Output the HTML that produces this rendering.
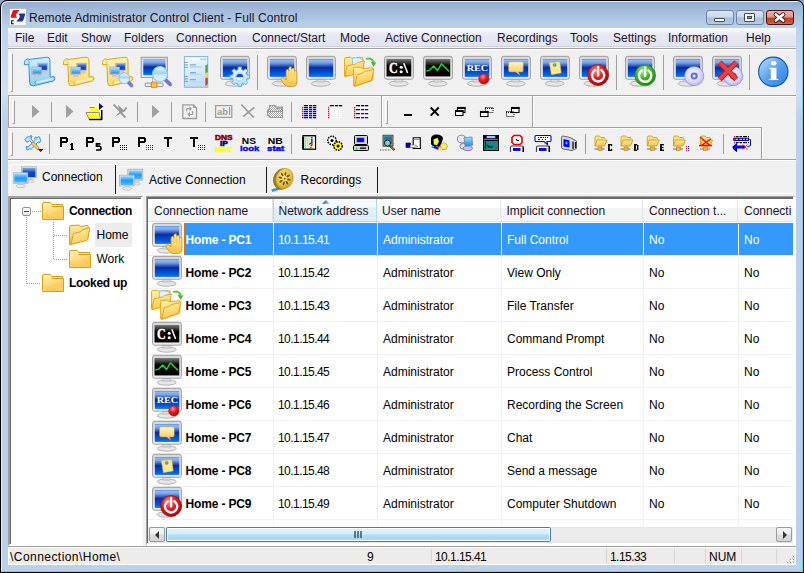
<!DOCTYPE html>
<html><head><meta charset="utf-8">
<style>
*{margin:0;padding:0;box-sizing:border-box}
html,body{width:804px;height:573px;overflow:hidden;background:#fff}
body{position:relative;font-family:"Liberation Sans",sans-serif;font-size:12px;color:#000}
.a{position:absolute}
.t{position:absolute;white-space:pre;line-height:14px}
#win{position:absolute;left:0;top:0;width:804px;height:573px;background:#b9d1ea;border:1px solid #000;border-radius:7px 7px 0 0;overflow:hidden}
#title{position:absolute;left:0;top:0;width:804px;height:28px;background:linear-gradient(#8ea8c9 0px,#a3bbd9 10px,#b9d1ea 27px)}
#menubar{position:absolute;left:8px;top:28px;width:788px;height:20px;background:linear-gradient(#fbfcfd 0px,#f2f4f9 3px,#e6e9f3 7px,#e1e5f2 18px,#cfd3de 18px,#cfd3de 19px,#f4f4f6 19px)}
#client{position:absolute;left:8px;top:48px;width:788px;height:517px;background:#f0f0f0}
.hl{position:absolute;height:1px;background:#a0a0a0}
.hw{position:absolute;height:1px;background:#fff}
.vl{position:absolute;width:1px;background:#a0a0a0}
.vw{position:absolute;width:1px;background:#fff}
.grip{position:absolute;width:3px;border-left:1px solid #fff;border-top:1px solid #fff;border-right:1px solid #a0a0a0;border-bottom:1px solid #a0a0a0}
.sep{position:absolute;width:1px;background:#a0a0a0}
svg{position:absolute;overflow:visible}
.mi{position:absolute;top:31px;white-space:pre;line-height:14px;color:#1e0f2e}
.cell{position:absolute;white-space:pre;line-height:14px}
</style></head><body>
<div id="win"></div>
<div id="title"></div>
<div class="a" style="left:0;top:0;width:804px;height:573px;border:1px solid #000;border-bottom:none;border-radius:7px 7px 0 0;box-shadow:inset 1px 1px 0 #e6edf6,inset -1px 0 0 #5fd3f3"></div>
<div class="a" style="left:0;top:572px;width:804px;height:1px;background:#000"></div>
<div class="a" style="left:1px;top:571px;width:802px;height:1px;background:#5fd3f3"></div>
<div class="a" style="left:2px;top:28px;width:6px;height:92px;background:linear-gradient(#bcd3eb,#cfe0f2 70%,#b9d1ea)"></div>
<div class="a" style="left:796px;top:28px;width:6px;height:92px;background:linear-gradient(#bcd3eb,#cfe0f2 70%,#b9d1ea)"></div>
<!-- app icon -->
<svg style="left:8px;top:7px" width="20" height="20" viewBox="0 0 573 573">
<rect x="55" y="55" width="460" height="455" fill="#fff"/>
<path d="M175 88 H332 Q300 120 262 175 Q225 225 232 250 Q240 280 262 305 H95 Q68 302 78 270 L130 120 Q142 90 175 88 Z" fill="#e8121a"/>
<path d="M335 186 H465 Q500 188 490 222 L438 382 Q426 412 395 414 H240 Q278 380 312 330 Q345 280 338 255 Q330 225 302 218 Q318 196 335 186 Z" fill="#1c3594"/>
<path d="M165 392 H105 V478 H165" fill="none" stroke="#000" stroke-width="30"/>
</svg>
<div class="t" style="left:29px;top:11px;color:#1a0f24;letter-spacing:0.1px">Remote Administrator Control Client - Full Control</div>

<!-- caption buttons -->
<div class="a" style="left:706px;top:10px;width:28px;height:15px;border:1px solid #6f84a2;border-radius:3px;background:linear-gradient(#dbe5f1 0,#c9d8ea 6px,#a9bfda 7px,#b9cde4 14px)"></div>
<div class="a" style="left:714px;top:18px;width:11px;height:4px;background:#fff;border:1px solid #3e4a5b;border-radius:1px"></div>
<div class="a" style="left:736px;top:10px;width:28px;height:15px;border:1px solid #6f84a2;border-radius:3px;background:linear-gradient(#dbe5f1 0,#c9d8ea 6px,#a9bfda 7px,#b9cde4 14px)"></div>
<div class="a" style="left:744px;top:13px;width:11px;height:9px;background:#fff;border:1px solid #3e4a5b;border-radius:1px"></div>
<div class="a" style="left:747px;top:16px;width:5px;height:3px;background:#8a98ab;border:1px solid #3e4a5b"></div>
<div class="a" style="left:766px;top:10px;width:28px;height:15px;border:1px solid #4a1018;border-radius:3px;background:linear-gradient(#eab0a2 0,#e09a88 6px,#c4421f 7px,#c8502e 11px,#d8806a 14px)"></div>
<svg style="left:773px;top:13px" width="13" height="9" viewBox="0 0 13 9"><path d="M2.8 1.5 L10.2 7.5 M10.2 1.5 L2.8 7.5" stroke="#3a1c24" stroke-width="4.4" stroke-linecap="round"/><path d="M2.8 1.5 L10.2 7.5 M10.2 1.5 L2.8 7.5" stroke="#fff" stroke-width="2.6" stroke-linecap="round"/></svg>

<div id="menubar"></div>
<div class="mi" style="left:15px">File</div>
<div class="mi" style="left:47px">Edit</div>
<div class="mi" style="left:81px">Show</div>
<div class="mi" style="left:124px">Folders</div>
<div class="mi" style="left:176px">Connection</div>
<div class="mi" style="left:252px">Connect/Start</div>
<div class="mi" style="left:340px">Mode</div>
<div class="mi" style="left:385px">Active Connection</div>
<div class="mi" style="left:497px">Recordings</div>
<div class="mi" style="left:570px">Tools</div>
<div class="mi" style="left:613px">Settings</div>
<div class="mi" style="left:668px">Information</div>
<div class="mi" style="left:746px">Help</div>

<div id="client"></div>
<!-- rebar lines -->
<div class="hl" style="left:8px;top:48px;width:788px"></div>
<div class="hw" style="left:8px;top:49px;width:788px"></div>
<div class="hl" style="left:8px;top:95px;width:788px"></div>
<div class="hw" style="left:8px;top:96px;width:788px"></div>
<div class="hl" style="left:8px;top:127px;width:754px"></div>
<div class="hw" style="left:8px;top:128px;width:754px"></div>
<div class="hl" style="left:8px;top:159px;width:788px"></div>
<div class="hw" style="left:8px;top:160px;width:788px"></div>
<div class="vl" style="left:8px;top:96px;height:32px"></div>
<div class="vw" style="left:9px;top:97px;height:30px"></div>
<div class="vl" style="left:381px;top:96px;height:32px"></div>
<div class="vw" style="left:382px;top:97px;height:30px"></div>
<div class="vl" style="left:532px;top:96px;height:32px"></div>
<div class="vw" style="left:533px;top:97px;height:30px"></div>
<div class="vl" style="left:761px;top:128px;height:32px"></div>
<div class="vw" style="left:762px;top:129px;height:30px"></div>

<!-- grips -->
<div class="grip" style="left:10px;top:53px;height:39px"></div>
<div class="grip" style="left:12px;top:100px;height:24px"></div>
<div class="grip" style="left:385px;top:100px;height:24px"></div>
<div class="grip" style="left:10px;top:132px;height:24px"></div>

<!-- separators row1 -->
<div class="sep" style="left:257px;top:55px;height:35px"></div>
<div class="sep" style="left:616px;top:55px;height:35px"></div>
<div class="sep" style="left:663px;top:55px;height:35px"></div>
<div class="sep" style="left:749px;top:55px;height:35px"></div>
<!-- separators row2 -->
<div class="sep" style="left:51px;top:102px;height:20px"></div>
<div class="sep" style="left:137px;top:102px;height:20px"></div>
<div class="sep" style="left:171px;top:102px;height:20px"></div>
<div class="sep" style="left:205px;top:102px;height:20px"></div>
<div class="sep" style="left:291px;top:102px;height:20px"></div>
<!-- separators row3 -->
<div class="sep" style="left:49px;top:134px;height:20px"></div>
<div class="sep" style="left:291px;top:134px;height:20px"></div>
<div class="sep" style="left:585px;top:134px;height:20px"></div>
<div class="sep" style="left:723px;top:134px;height:20px"></div>

<svg width="0" height="0" style="position:absolute"><defs>
<linearGradient id="scr" x1="0" y1="0" x2="0" y2="1">
<stop offset="0" stop-color="#3d86f2"/><stop offset="0.06" stop-color="#8fb9f0"/><stop offset="0.2" stop-color="#7aa6e8"/><stop offset="0.48" stop-color="#0a2c9c"/><stop offset="0.56" stop-color="#0038b8"/><stop offset="0.9" stop-color="#0066e6"/><stop offset="1" stop-color="#2a86f5"/></linearGradient>
<linearGradient id="blk" x1="0" y1="0" x2="0" y2="1"><stop offset="0" stop-color="#7c7c7c"/><stop offset="0.4" stop-color="#000"/><stop offset="1" stop-color="#000"/></linearGradient>
<linearGradient id="frm" x1="0" y1="0" x2="0" y2="1"><stop offset="0" stop-color="#d9d7d7"/><stop offset="1" stop-color="#efeded"/></linearGradient>
<radialGradient id="redb" cx="0.4" cy="0.3" r="0.7"><stop offset="0" stop-color="#ff8a8a"/><stop offset="0.5" stop-color="#e41e1e"/><stop offset="1" stop-color="#b00808"/></radialGradient>
<radialGradient id="grnb" cx="0.4" cy="0.3" r="0.7"><stop offset="0" stop-color="#a6ee8c"/><stop offset="0.5" stop-color="#3cb52a"/><stop offset="1" stop-color="#228a18"/></radialGradient>
<radialGradient id="cd" cx="0.45" cy="0.4" r="0.6"><stop offset="0" stop-color="#f4f4ff"/><stop offset="0.7" stop-color="#d6d6f6"/><stop offset="1" stop-color="#b4b4e8"/></radialGradient>
<linearGradient id="info" x1="0" y1="0" x2="1" y2="1"><stop offset="0" stop-color="#c6e0fb"/><stop offset="0.5" stop-color="#5aa2ee"/><stop offset="1" stop-color="#2b7de0"/></linearGradient>
<linearGradient id="ysc" x1="0" y1="0" x2="0" y2="1"><stop offset="0" stop-color="#fff4b4"/><stop offset="1" stop-color="#fad86c"/></linearGradient>
<linearGradient id="bsc" x1="0" y1="0" x2="0" y2="1"><stop offset="0" stop-color="#d2efff"/><stop offset="1" stop-color="#8ecbf6"/></linearGradient>
<linearGradient id="lbs" x1="0" y1="0" x2="0" y2="1"><stop offset="0" stop-color="#aee0ff"/><stop offset="1" stop-color="#1e8ef0"/></linearGradient>
<linearGradient id="dbs" x1="0" y1="0" x2="0" y2="1"><stop offset="0" stop-color="#7aa6ea"/><stop offset="0.5" stop-color="#1a44c0"/><stop offset="1" stop-color="#0040c8"/></linearGradient>
<linearGradient id="yf" x1="0" y1="0" x2="0.3" y2="1"><stop offset="0" stop-color="#fff2a8"/><stop offset="1" stop-color="#f8c648"/></linearGradient>
<linearGradient id="chat" x1="0" y1="0" x2="0" y2="1"><stop offset="0" stop-color="#fff6c8"/><stop offset="1" stop-color="#fcc44a"/></linearGradient>
<linearGradient id="mag" x1="0" y1="0" x2="0" y2="1"><stop offset="0" stop-color="#e8f6ff"/><stop offset="0.5" stop-color="#9fd0f4"/><stop offset="0.55" stop-color="#c8ecf2"/><stop offset="1" stop-color="#e0f8f8"/></linearGradient>
<linearGradient id="hand" x1="0" y1="0" x2="0" y2="1"><stop offset="0" stop-color="#fff1b0"/><stop offset="1" stop-color="#f5c040"/></linearGradient>
<linearGradient id="docg" x1="0" y1="0" x2="0.3" y2="1"><stop offset="0" stop-color="#f4faff"/><stop offset="1" stop-color="#c4def6"/></linearGradient>
<linearGradient id="gearg" x1="0" y1="0" x2="0" y2="1"><stop offset="0" stop-color="#eaf8ff"/><stop offset="1" stop-color="#b2dcf8"/></linearGradient>
<symbol id="mon" viewBox="0 0 573 573">
<ellipse cx="282" cy="452" rx="136" ry="38" fill="#e6e6e6" stroke="#a8a8a8" stroke-width="12"/>
<rect x="228" y="385" width="104" height="45" fill="#dcdcdc" stroke="#b0b0b0" stroke-width="10"/>
<rect x="80" y="62" width="412" height="328" rx="30" fill="url(#frm)" stroke="#9a9a9a" stroke-width="14"/>
<rect x="112" y="100" width="350" height="258" fill="url(#scr)"/>
</symbol>
<symbol id="monb" viewBox="0 0 573 573">
<ellipse cx="282" cy="452" rx="136" ry="38" fill="#e6e6e6" stroke="#a8a8a8" stroke-width="12"/>
<rect x="228" y="385" width="104" height="45" fill="#dcdcdc" stroke="#b0b0b0" stroke-width="10"/>
<rect x="80" y="62" width="412" height="328" rx="30" fill="url(#frm)" stroke="#9a9a9a" stroke-width="14"/>
<rect x="108" y="100" width="354" height="250" fill="url(#blk)"/>
</symbol>
<symbol id="twomon" viewBox="0 0 573 573">
<rect x="230" y="95" width="200" height="145" fill="#cfcfcf" stroke="#9a9a9a" stroke-width="10"/>
<rect x="245" y="108" width="170" height="118" fill="url(#dbs)"/>
<path d="M320 240 h60 v30 h-60z" fill="#d8d8d8"/>
<ellipse cx="350" cy="280" rx="55" ry="12" fill="#e0e0e0" stroke="#aaa" stroke-width="8"/>
<rect x="150" y="170" width="200" height="150" fill="#d4d4d4" stroke="#9a9a9a" stroke-width="10"/>
<rect x="165" y="183" width="170" height="123" fill="url(#lbs)"/>
<path d="M215 320 h70 v25 h-70z" fill="#d8d8d8"/>
<ellipse cx="250" cy="355" rx="60" ry="13" fill="#e0e0e0" stroke="#aaa" stroke-width="8"/>
</symbol>
<symbol id="power" viewBox="0 0 573 573">
<circle cx="0" cy="0" r="150" fill="url(#PG)" stroke="#9a1010" stroke-width="10"/>
</symbol>
</defs></svg>
<svg style="left:20px;top:52px" width="40" height="40" viewBox="0 0 573 573"><path d="M128 108 L380 75 Q425 70 428 110 L432 360 L470 352 Q505 348 500 385 Q495 410 470 418 L190 485 Q140 490 138 440 L128 180 L62 182 Q62 112 100 100 Q125 96 128 108 Z" fill="url(#bsc)" stroke="#2a8ce0" stroke-width="14" stroke-linejoin="round"/><path d="M128 178 Q140 125 105 112" fill="none" stroke="#2a8ce0" stroke-width="9"/><path d="M235 438 L465 385" fill="none" stroke="#fff" stroke-width="24" opacity="0.6"/><path d="M236 408 Q200 425 218 462" fill="none" stroke="#2a8ce0" stroke-width="9"/><rect x="255" y="160" width="140" height="105" fill="#c9c9c9" stroke="#999" stroke-width="8"/><rect x="265" y="170" width="120" height="85" fill="url(#dbs)"/><path d="M315 265 h40 v18 h-40z" fill="#ccc"/><ellipse cx="340" cy="292" rx="40" ry="9" fill="#ddd" stroke="#aaa" stroke-width="6"/><rect x="170" y="215" width="140" height="105" fill="#cfcfcf" stroke="#999" stroke-width="8"/><rect x="180" y="225" width="120" height="85" fill="url(#lbs)"/><path d="M220 320 h40 v15 h-40z" fill="#ccc"/><ellipse cx="240" cy="345" rx="40" ry="9" fill="#ddd" stroke="#aaa" stroke-width="6"/></svg>
<svg style="left:59px;top:52px" width="40" height="40" viewBox="0 0 573 573"><path d="M128 108 L380 75 Q425 70 428 110 L432 360 L470 352 Q505 348 500 385 Q495 410 470 418 L190 485 Q140 490 138 440 L128 180 L62 182 Q62 112 100 100 Q125 96 128 108 Z" fill="url(#ysc)" stroke="#d9a21a" stroke-width="14" stroke-linejoin="round"/><path d="M128 178 Q140 125 105 112" fill="none" stroke="#d9a21a" stroke-width="9"/><path d="M235 438 L465 385" fill="none" stroke="#fff" stroke-width="24" opacity="0.6"/><path d="M236 408 Q200 425 218 462" fill="none" stroke="#d9a21a" stroke-width="9"/><rect x="255" y="160" width="140" height="105" fill="#c9c9c9" stroke="#999" stroke-width="8"/><rect x="265" y="170" width="120" height="85" fill="url(#dbs)"/><path d="M315 265 h40 v18 h-40z" fill="#ccc"/><ellipse cx="340" cy="292" rx="40" ry="9" fill="#ddd" stroke="#aaa" stroke-width="6"/><rect x="170" y="215" width="140" height="105" fill="#cfcfcf" stroke="#999" stroke-width="8"/><rect x="180" y="225" width="120" height="85" fill="url(#lbs)"/><path d="M220 320 h40 v15 h-40z" fill="#ccc"/><ellipse cx="240" cy="345" rx="40" ry="9" fill="#ddd" stroke="#aaa" stroke-width="6"/></svg>
<svg style="left:98px;top:52px" width="40" height="40" viewBox="0 0 573 573"><path d="M128 108 L380 75 Q425 70 428 110 L432 360 L470 352 Q505 348 500 385 Q495 410 470 418 L190 485 Q140 490 138 440 L128 180 L62 182 Q62 112 100 100 Q125 96 128 108 Z" fill="url(#ysc)" stroke="#d9a21a" stroke-width="14" stroke-linejoin="round"/><path d="M128 178 Q140 125 105 112" fill="none" stroke="#d9a21a" stroke-width="9"/><path d="M235 438 L465 385" fill="none" stroke="#fff" stroke-width="24" opacity="0.6"/><path d="M236 408 Q200 425 218 462" fill="none" stroke="#d9a21a" stroke-width="9"/><rect x="255" y="160" width="140" height="105" fill="#c9c9c9" stroke="#999" stroke-width="8"/><rect x="265" y="170" width="120" height="85" fill="url(#dbs)"/><path d="M315 265 h40 v18 h-40z" fill="#ccc"/><ellipse cx="340" cy="292" rx="40" ry="9" fill="#ddd" stroke="#aaa" stroke-width="6"/><rect x="170" y="215" width="140" height="105" fill="#cfcfcf" stroke="#999" stroke-width="8"/><rect x="180" y="225" width="120" height="85" fill="url(#lbs)"/><path d="M220 320 h40 v15 h-40z" fill="#ccc"/><ellipse cx="240" cy="345" rx="40" ry="9" fill="#ddd" stroke="#aaa" stroke-width="6"/><path d="M420 420 L480 480" stroke="#7a74d8" stroke-width="50" stroke-linecap="round"/><circle cx="375" cy="375" r="78" fill="url(#mag)" stroke="#7cc0ee" stroke-width="14"/></svg>
<svg style="left:137px;top:52px" width="40" height="40" viewBox="0 0 573 573"><rect x="60" y="75" width="375" height="290" fill="url(#frm)" stroke="#9a9a9a" stroke-width="14"/><rect x="90" y="108" width="318" height="225" fill="url(#scr)"/><rect x="215" y="365" width="16" height="80" fill="#b8b8b8"/><rect x="118" y="445" width="255" height="50" rx="8" fill="#e8e8f0" stroke="#8a8a8a" stroke-width="12"/><rect x="205" y="430" width="80" height="80" rx="12" fill="#ffc43a" stroke="#e85a10" stroke-width="10"/><path d="M410 400 L475 465" stroke="#7a74d8" stroke-width="55" stroke-linecap="round"/><circle cx="330" cy="315" r="108" fill="url(#mag)" stroke="#86c6ee" stroke-width="16"/></svg>
<svg style="left:176px;top:52px" width="40" height="40" viewBox="0 0 573 573"><rect x="120" y="65" width="335" height="440" fill="url(#docg)" stroke="#7fb7e6" stroke-width="14"/><rect x="135" y="85" width="200" height="30" fill="#fff"/><rect x="345" y="95" width="85" height="20" fill="#a9d2f4"/><path d="M420 190 L455 175 V300 L420 310 Z" fill="#44b23a"/><path d="M420 300 L455 290 V375 L420 385 Z" fill="#f6d24e"/><path d="M420 375 L455 365 V460 L420 490 Z" fill="#e03a2a"/><path d="M200 215 h175 M200 320 h175 M200 425 h175" stroke="#b6daf7" stroke-width="26"/><path d="M200 185 h85 M200 295 h85 M200 395 h85" stroke="#6aaee8" stroke-width="16"/><path d="M120 150 h50 M120 185 h50 M120 220 h50 M120 350 h50 M120 385 h50 M120 420 h50" stroke="#707070" stroke-width="10"/></svg>
<svg style="left:215.4px;top:52px" width="40" height="40" viewBox="0 0 573 573"><use href="#mon" x="0" y="0" width="573" height="573"/><polygon points="331,215 379,215 379,250 413,264 437,239 471,273 446,297 460,331 495,331 495,379 460,379 446,413 471,437 437,471 413,446 379,460 379,495 331,495 331,460 297,446 273,471 239,437 264,413 250,379 215,379 215,331 250,331 264,297 239,273 273,239 297,264 331,250" fill="url(#gearg)" stroke="#58a8ec" stroke-width="13" stroke-linejoin="round"/><circle cx="355" cy="355" r="58" fill="#f4fbff" stroke="#8ccaf2" stroke-width="10"/><path d="M305 360 A50 50 0 0 1 405 360 Z" fill="#1850c8"/></svg>
<svg style="left:262.3px;top:52px" width="40" height="40" viewBox="0 0 573 573"><use href="#mon" x="0" y="0" width="573" height="573"/><path d="M262 385 Q285 352 322 375 L345 400 L345 275 Q345 250 365 250 Q385 250 385 275 L385 235 Q385 212 405 212 Q425 212 425 235 L425 250 Q428 230 448 232 Q465 235 465 255 L465 280 Q470 262 485 265 Q500 270 500 290 L500 430 Q500 495 435 495 L370 495 Q330 490 300 440 Z" fill="url(#hand)" stroke="#c8941e" stroke-width="12" stroke-linejoin="round"/><path d="M385 275 V350 M425 250 V350 M465 280 V350" stroke="#e9b53a" stroke-width="8" fill="none"/></svg>
<svg style="left:301.3px;top:52px" width="40" height="40" viewBox="0 0 573 573"><use href="#mon" x="0" y="0" width="573" height="573"/></svg>
<svg style="left:340.3px;top:52px" width="40" height="40" viewBox="0 0 573 573"><path d="M65 95 Q65 80 80 80 L150 75 L170 90 L310 80 Q330 78 330 95 L330 270 L80 350 Q62 352 65 335 Z" fill="url(#yf)" stroke="#d89e12" stroke-width="12"/><path d="M180 85 L290 85 L335 130 L335 250 L180 270 Z" fill="url(#docg)" stroke="#6fb0e8" stroke-width="10"/><path d="M100 200 L230 170 L250 150 L350 130 L320 300 L70 350 Z" fill="url(#yf)" stroke="#d89e12" stroke-width="12" stroke-linejoin="round"/><path d="M375 100 Q455 75 485 150" fill="none" stroke="#5cc840" stroke-width="30"/><path d="M440 140 L520 150 L480 215 Z" fill="#4cba30"/><path d="M195 240 Q190 220 210 220 L300 218 L320 240 L460 225 Q480 222 478 245 L470 390 Q468 410 450 412 L215 490 Q195 495 195 475 Z" fill="url(#yf)" stroke="#d89e12" stroke-width="12" stroke-linejoin="round"/><path d="M245 330 L330 300 L350 280 L485 250 L450 410 L210 490 Z" fill="url(#yf)" stroke="#d89e12" stroke-width="12" stroke-linejoin="round"/></svg>
<svg style="left:379.3px;top:52px" width="40" height="40" viewBox="0 0 573 573"><use href="#monb" x="0" y="0" width="573" height="573"/><text x="145" y="300" font-family="Liberation Serif" font-weight="bold" font-size="205" fill="#fff" stroke="#fff" stroke-width="6" textLength="125" lengthAdjust="spacingAndGlyphs">C</text><circle cx="318" cy="218" r="22" fill="#fff"/><circle cx="318" cy="282" r="22" fill="#fff"/><path d="M355 160 L410 300" stroke="#fff" stroke-width="22"/></svg>
<svg style="left:418.3px;top:52px" width="40" height="40" viewBox="0 0 573 573"><use href="#monb" x="0" y="0" width="573" height="573"/><path d="M118 275 L165 260 L225 200 L280 265 L335 170 L445 280" fill="none" stroke="#12e61a" stroke-width="20" stroke-linejoin="round"/></svg>
<svg style="left:457.3px;top:52px" width="40" height="40" viewBox="0 0 573 573"><use href="#mon" x="0" y="0" width="573" height="573"/><text x="140" y="268" font-family="Liberation Serif" font-weight="bold" font-size="130" fill="#fff" textLength="305" lengthAdjust="spacingAndGlyphs">REC</text><circle cx="385" cy="385" r="75" fill="url(#redb)" stroke="#c01010" stroke-width="8"/></svg>
<svg style="left:496.3px;top:52px" width="40" height="40" viewBox="0 0 573 573"><use href="#mon" x="0" y="0" width="573" height="573"/><path d="M200 140 H370 Q390 140 390 160 V265 Q390 285 370 285 H320 L340 330 L280 285 H200 Q180 285 180 265 V160 Q180 140 200 140 Z" fill="url(#chat)" stroke="#d29a2a" stroke-width="8" stroke-linejoin="round"/></svg>
<svg style="left:535.3px;top:52px" width="40" height="40" viewBox="0 0 573 573"><use href="#mon" x="0" y="0" width="573" height="573"/><path d="M205 150 L355 140 L375 300 L235 325 Z" fill="#fde98a" stroke="#e6b840" stroke-width="8"/><circle cx="282" cy="185" r="22" fill="#4aa8ee" stroke="#1a70c0" stroke-width="6"/></svg>
<svg style="left:574.3px;top:52px" width="40" height="40" viewBox="0 0 573 573"><use href="#mon" x="0" y="0" width="573" height="573"/><circle cx="345" cy="330" r="150" fill="url(#redb)" stroke="#a30c0c" stroke-width="10"/><path d="M297 260 A88 88 0 1 0 393 260" fill="none" stroke="#fff" stroke-width="34" stroke-linecap="round"/><path d="M345 215 V335" stroke="#fff" stroke-width="34" stroke-linecap="round"/></svg>
<svg style="left:620px;top:52px" width="40" height="40" viewBox="0 0 573 573"><use href="#mon" x="0" y="0" width="573" height="573"/><circle cx="360" cy="335" r="150" fill="url(#grnb)" stroke="#2a8a1a" stroke-width="10"/><path d="M312 265 A88 88 0 1 0 408 265" fill="none" stroke="#fff" stroke-width="34" stroke-linecap="round"/><path d="M360 220 V340" stroke="#fff" stroke-width="34" stroke-linecap="round"/></svg>
<svg style="left:668px;top:52px" width="40" height="40" viewBox="0 0 573 573"><use href="#mon" x="0" y="0" width="573" height="573"/><circle cx="375" cy="345" r="138" fill="url(#cd)" stroke="#8a8ad8" stroke-width="10"/><circle cx="375" cy="345" r="50" fill="#6a6ad8"/><circle cx="375" cy="345" r="22" fill="#dfe8ff"/></svg>
<svg style="left:706.8px;top:52px" width="40" height="40" viewBox="0 0 573 573"><use href="#mon" x="0" y="0" width="573" height="573"/><circle cx="375" cy="345" r="138" fill="url(#cd)" stroke="#8a8ad8" stroke-width="10"/><circle cx="375" cy="345" r="50" fill="#6a6ad8"/><circle cx="375" cy="345" r="22" fill="#dfe8ff"/><path d="M180 150 L420 390 M420 150 L180 390" stroke="#b81818" stroke-width="78" stroke-linecap="butt"/><path d="M180 150 L420 390 M420 150 L180 390" stroke="#ec4040" stroke-width="56"/></svg>
<svg style="left:752px;top:52px" width="40" height="40" viewBox="0 0 573 573"><circle cx="305" cy="283" r="210" fill="url(#info)" stroke="#0b55b0" stroke-width="16"/><ellipse cx="310" cy="160" rx="40" ry="32" fill="#fff"/><path d="M245 225 H350 V385 H378 V400 H242 V385 H270 V240 H245 Z" fill="#fff"/></svg>
<svg style="left:0;top:0" width="804" height="573" viewBox="0 0 804 573">
<defs>
<pattern id="dy" width="2" height="2" patternUnits="userSpaceOnUse"><rect width="2" height="2" fill="#fff"/><rect width="1" height="1" fill="#ffff00"/><rect x="1" y="1" width="1" height="1" fill="#ffff00"/></pattern>
<linearGradient id="glb" x1="0" y1="0" x2="0" y2="1"><stop offset="0" stop-color="#9ee0ff"/><stop offset="1" stop-color="#1f8cf2"/></linearGradient>
<pattern id="dg" width="2" height="2" patternUnits="userSpaceOnUse"><rect width="2" height="2" fill="#fff"/><rect width="1" height="1" fill="#a0a0a0"/><rect x="1" y="1" width="1" height="1" fill="#a0a0a0"/></pattern>
</defs>
<polygon points="32,105 39.5,111.5 32,118" fill="#a0a0a0"/>
<polygon points="66,105 73.5,111.5 66,118" fill="#a0a0a0"/>
<polygon points="152,105 159.5,111.5 152,118" fill="#a0a0a0"/>
<path d="M89.5 107.5 H94.5 L96 109.5 H99.5 V112" fill="none" stroke="#8c8c8c" stroke-width="1"/>
<rect x="89" y="108" width="11" height="4" fill="url(#dy)"/>
<polygon points="86,112.5 99,112.5 100.5,119 89,119" fill="url(#dy)" stroke="#8c8c8c" stroke-width="1"/>
<rect x="101" y="110" width="1.5" height="10" fill="#000"/><rect x="89" y="119" width="13" height="1.2" fill="#000"/>
<polygon points="99,103 103.2,106.5 99,110" fill="#00007a"/>
<path d="M113.5 104.5 L121 112 M124 111 L126.5 107.5 M121 113 L125.5 117.5" stroke="#999" stroke-width="1.8" fill="none"/>
<polygon points="118.3,105 124.8,111.3 115,116.8 119.2,112 118.5,108" fill="#999"/>
<path d="M182.8 104.8 H193.5 L196.5 108 V118.5 H182.8 Z" fill="none" stroke="#9c9c9c" stroke-width="1.3"/>
<path d="M193.5 104.8 V107.5 H196.5" fill="none" stroke="#9c9c9c" stroke-width="1"/>
<path d="M186.8 111.5 V108.8 H190" fill="none" stroke="#9c9c9c" stroke-width="1.1"/><polygon points="189.5,106.3 192,108.8 189.5,111.2" fill="#9c9c9c"/>
<path d="M192.6 111 V114.5 H189.5" fill="none" stroke="#9c9c9c" stroke-width="1.1"/><polygon points="190,112 187.3,114.5 190,117" fill="#9c9c9c"/>
<rect x="215.6" y="105.6" width="16.2" height="11.8" fill="none" stroke="#9c9c9c" stroke-width="1.2"/>
<text x="217" y="115" font-family="Liberation Sans" font-weight="bold" font-size="9.5" fill="#9c9c9c" textLength="11" lengthAdjust="spacingAndGlyphs">ab</text><rect x="229" y="107" width="1.2" height="8" fill="#9c9c9c"/>
<path d="M241.3 104.5 L253.8 117.6 M254.3 107.3 L243.2 116.7" stroke="#9c9c9c" stroke-width="1.7"/>
<path d="M269.5 105.5 H275 L276.5 107.2 H282.5 V117.5 H270 L267.5 115 V110.5 L269.5 108 Z" fill="url(#dg)" stroke="#9c9c9c" stroke-width="1.2"/>
<path d="M267.5 111.5 H281 M277 108.5 H282" stroke="#9c9c9c" stroke-width="1"/>
<rect x="303.9" y="105" width="4.100000000000023" height="1.3" fill="#000"/>
<rect x="309" y="105" width="3.1999999999999886" height="1.3" fill="#000"/>
<rect x="313" y="105" width="3.1999999999999886" height="1.3" fill="#000"/>
<rect x="302" y="107" width="1.3" height="1.3" fill="#f00"/>
<rect x="303.9" y="107" width="4.100000000000023" height="1.3" fill="#00f"/>
<rect x="309" y="107" width="3.1999999999999886" height="1.3" fill="#00f"/>
<rect x="313" y="107" width="3.1999999999999886" height="1.3" fill="#00f"/>
<rect x="302" y="109" width="1.3" height="1.3" fill="#f00"/>
<rect x="303.9" y="109" width="4.100000000000023" height="1.3" fill="#00f"/>
<rect x="309" y="109" width="3.1999999999999886" height="1.3" fill="#00f"/>
<rect x="313" y="109" width="3.1999999999999886" height="1.3" fill="#00f"/>
<rect x="302" y="111" width="1.3" height="1.3" fill="#f00"/>
<rect x="303.9" y="111" width="4.100000000000023" height="1.3" fill="#00f"/>
<rect x="309" y="111" width="3.1999999999999886" height="1.3" fill="#00f"/>
<rect x="313" y="111" width="3.1999999999999886" height="1.3" fill="#00f"/>
<rect x="302" y="113" width="1.3" height="1.3" fill="#f00"/>
<rect x="303.9" y="113" width="4.100000000000023" height="1.3" fill="#00f"/>
<rect x="309" y="113" width="3.1999999999999886" height="1.3" fill="#00f"/>
<rect x="313" y="113" width="3.1999999999999886" height="1.3" fill="#00f"/>
<rect x="302" y="115" width="1.3" height="1.3" fill="#f00"/>
<rect x="303.9" y="115" width="4.100000000000023" height="1.3" fill="#00f"/>
<rect x="309" y="115" width="3.1999999999999886" height="1.3" fill="#00f"/>
<rect x="313" y="115" width="3.1999999999999886" height="1.3" fill="#00f"/>
<rect x="302" y="117" width="1.3" height="1.3" fill="#f00"/>
<rect x="303.9" y="117" width="4.100000000000023" height="1.3" fill="#00f"/>
<rect x="309" y="117" width="3.1999999999999886" height="1.3" fill="#00f"/>
<rect x="313" y="117" width="3.1999999999999886" height="1.3" fill="#00f"/>
<rect x="329.9" y="105" width="4.100000000000023" height="1.3" fill="#000"/>
<rect x="335" y="105" width="3.1999999999999886" height="1.3" fill="#000"/>
<rect x="339" y="105" width="3.1999999999999886" height="1.3" fill="#000"/>
<rect x="328" y="107" width="1.3" height="1.3" fill="#f00"/>
<rect x="329.9" y="107" width="4.100000000000023" height="1.3" fill="#fff"/>
<rect x="335" y="107" width="3.1999999999999886" height="1.3" fill="#fff"/>
<rect x="339" y="107" width="3.1999999999999886" height="1.3" fill="#fff"/>
<rect x="328" y="109" width="1.3" height="1.3" fill="#f00"/>
<rect x="329.9" y="109" width="4.100000000000023" height="1.3" fill="#fff"/>
<rect x="335" y="109" width="3.1999999999999886" height="1.3" fill="#fff"/>
<rect x="339" y="109" width="3.1999999999999886" height="1.3" fill="#fff"/>
<rect x="328" y="111" width="1.3" height="1.3" fill="#f00"/>
<rect x="329.9" y="111" width="4.100000000000023" height="1.3" fill="#fff"/>
<rect x="335" y="111" width="3.1999999999999886" height="1.3" fill="#fff"/>
<rect x="339" y="111" width="3.1999999999999886" height="1.3" fill="#fff"/>
<rect x="328" y="113" width="1.3" height="1.3" fill="#f00"/>
<rect x="329.9" y="113" width="4.100000000000023" height="1.3" fill="#fff"/>
<rect x="335" y="113" width="3.1999999999999886" height="1.3" fill="#fff"/>
<rect x="339" y="113" width="3.1999999999999886" height="1.3" fill="#fff"/>
<rect x="328" y="115" width="1.3" height="1.3" fill="#f00"/>
<rect x="329.9" y="115" width="4.100000000000023" height="1.3" fill="#fff"/>
<rect x="335" y="115" width="3.1999999999999886" height="1.3" fill="#fff"/>
<rect x="339" y="115" width="3.1999999999999886" height="1.3" fill="#fff"/>
<rect x="328" y="117" width="1.3" height="1.3" fill="#f00"/>
<rect x="329.9" y="117" width="4.100000000000023" height="1.3" fill="#fff"/>
<rect x="335" y="117" width="3.1999999999999886" height="1.3" fill="#fff"/>
<rect x="339" y="117" width="3.1999999999999886" height="1.3" fill="#fff"/>
<rect x="355.9" y="105" width="4.100000000000023" height="1.3" fill="#000"/>
<rect x="361" y="105" width="3.1999999999999886" height="1.3" fill="#000"/>
<rect x="365" y="105" width="3.1999999999999886" height="1.3" fill="#000"/>
<rect x="354" y="107" width="1.3" height="1.3" fill="#f00"/>
<rect x="355.9" y="107" width="4.100000000000023" height="1.3" fill="#fff"/>
<rect x="361" y="107" width="3.1999999999999886" height="1.3" fill="#fff"/>
<rect x="365" y="107" width="3.1999999999999886" height="1.3" fill="#fff"/>
<rect x="354" y="109" width="1.3" height="1.3" fill="#f00"/>
<rect x="355.9" y="109" width="4.100000000000023" height="1.3" fill="#fff"/>
<rect x="361" y="109" width="3.1999999999999886" height="1.3" fill="#fff"/>
<rect x="365" y="109" width="3.1999999999999886" height="1.3" fill="#fff"/>
<rect x="355.9" y="109" width="4.100000000000023" height="1.3" fill="#00f"/>
<rect x="361" y="109" width="3.1999999999999886" height="1.3" fill="#00f"/>
<rect x="365" y="109" width="3.1999999999999886" height="1.3" fill="#00f"/>
<rect x="354" y="111" width="1.3" height="1.3" fill="#f00"/>
<rect x="355.9" y="111" width="4.100000000000023" height="1.3" fill="#fff"/>
<rect x="361" y="111" width="3.1999999999999886" height="1.3" fill="#fff"/>
<rect x="365" y="111" width="3.1999999999999886" height="1.3" fill="#fff"/>
<rect x="354" y="113" width="1.3" height="1.3" fill="#f00"/>
<rect x="355.9" y="113" width="4.100000000000023" height="1.3" fill="#fff"/>
<rect x="361" y="113" width="3.1999999999999886" height="1.3" fill="#fff"/>
<rect x="365" y="113" width="3.1999999999999886" height="1.3" fill="#fff"/>
<rect x="355.9" y="113" width="4.100000000000023" height="1.3" fill="#00f"/>
<rect x="361" y="113" width="3.1999999999999886" height="1.3" fill="#00f"/>
<rect x="365" y="113" width="3.1999999999999886" height="1.3" fill="#00f"/>
<rect x="354" y="115" width="1.3" height="1.3" fill="#f00"/>
<rect x="355.9" y="115" width="4.100000000000023" height="1.3" fill="#fff"/>
<rect x="361" y="115" width="3.1999999999999886" height="1.3" fill="#fff"/>
<rect x="365" y="115" width="3.1999999999999886" height="1.3" fill="#fff"/>
<rect x="354" y="117" width="1.3" height="1.3" fill="#f00"/>
<rect x="355.9" y="117" width="4.100000000000023" height="1.3" fill="#fff"/>
<rect x="361" y="117" width="3.1999999999999886" height="1.3" fill="#fff"/>
<rect x="365" y="117" width="3.1999999999999886" height="1.3" fill="#fff"/>
<rect x="355.9" y="117" width="4.100000000000023" height="1.3" fill="#00f"/>
<rect x="361" y="117" width="3.1999999999999886" height="1.3" fill="#00f"/>
<rect x="365" y="117" width="3.1999999999999886" height="1.3" fill="#00f"/>
<rect x="404" y="114" width="8" height="2" fill="#000"/>
<path d="M430.7 107.5 L438.7 115.7 M438.7 107.5 L430.7 115.7" stroke="#000" stroke-width="1.9"/>
<rect x="457.2" y="107.2" width="8" height="5.3" fill="#fff"/><rect x="457.5" y="107.5" width="7.5" height="5" fill="none" stroke="#000" stroke-width="1.1"/><rect x="457" y="107" width="8.5" height="2" fill="#000"/>
<rect x="455.2" y="110.2" width="8" height="5.3" fill="#fff"/><rect x="455.5" y="110.5" width="7.5" height="5" fill="none" stroke="#000" stroke-width="1.1"/><rect x="455" y="110" width="8.5" height="2" fill="#000"/>
<rect x="485.5" y="107.5" width="7.5" height="5" fill="none" stroke="#000" stroke-width="1" stroke-dasharray="1 1"/><path d="M485 108.5 h8.5" stroke="#000" stroke-width="1" stroke-dasharray="1 1"/>
<rect x="480.2" y="111.2" width="8" height="5.3" fill="#fff"/><rect x="480.5" y="111.5" width="7.5" height="5" fill="none" stroke="#000" stroke-width="1.1"/><rect x="480" y="111" width="8.5" height="2" fill="#000"/>
<rect x="511.2" y="107.2" width="8" height="5.3" fill="#fff"/><rect x="511.5" y="107.5" width="7.5" height="5" fill="none" stroke="#000" stroke-width="1.1"/><rect x="511" y="107" width="8.5" height="2" fill="#000"/>
<rect x="506.5" y="111.5" width="7.5" height="5" fill="none" stroke="#000" stroke-width="1" stroke-dasharray="1 1"/><path d="M506 112.5 h8.5" stroke="#000" stroke-width="1" stroke-dasharray="1 1"/>
<path d="M25 139.5 L28.5 136 L30 137.5 L30.5 135.5 L32 136 L31 139 L37 145 L35.5 146.5 L29.5 140.5 L27 142.5 Z" fill="#bfe3fb" stroke="#3a95e0" stroke-width="1"/>
<path d="M39.5 137 L38 136.5 L36.5 138.5 L36 137 L34.5 138 L35.5 140 L27.5 147.5 L27 146 L26 147 L27 150 L29 149.5 L29.5 148.5 L31 149.5 L38 142 L40 142.5 L40.5 140 Z" fill="#cde9fc" stroke="#3a95e0" stroke-width="1"/>
<path d="M33 143.5 L37.5 148" stroke="#c08a2a" stroke-width="3.6" stroke-linecap="round"/><path d="M33 143.5 L37.5 148" stroke="#f2c868" stroke-width="2.2" stroke-linecap="round"/>
<polygon points="38,149 43.5,149 40.75,152" fill="#000"/>
<rect x="60" y="137" width="2" height="10" fill="#000"/><rect x="60" y="137" width="7" height="2" fill="#000"/><rect x="66" y="138" width="2" height="4" fill="#000"/><rect x="60" y="141" width="7" height="2" fill="#000"/>
<rect x="71" y="143" width="2" height="7" fill="#000"/><rect x="70" y="144" width="1" height="1" fill="#000"/><rect x="70" y="149" width="4" height="1" fill="#000"/>
<rect x="86" y="137" width="2" height="10" fill="#000"/><rect x="86" y="137" width="7" height="2" fill="#000"/><rect x="92" y="138" width="2" height="4" fill="#000"/><rect x="86" y="141" width="7" height="2" fill="#000"/>
<path d="M100.5 143.8 H96.5 V146.2 H99.8 Q101 146.5 101 148 Q101 150 99.5 150 H96" fill="none" stroke="#000" stroke-width="1.7"/>
<rect x="112" y="137" width="2" height="10" fill="#000"/><rect x="112" y="137" width="7" height="2" fill="#000"/><rect x="118" y="138" width="2" height="4" fill="#000"/><rect x="112" y="141" width="7" height="2" fill="#000"/><rect x="120" y="145" width="1" height="1" fill="#000"/><rect x="122" y="145" width="1" height="1" fill="#000"/><rect x="124" y="145" width="1" height="1" fill="#000"/><rect x="126" y="145" width="1" height="1" fill="#000"/><rect x="120" y="147" width="1" height="1" fill="#000"/><rect x="122" y="147" width="1" height="1" fill="#000"/><rect x="124" y="147" width="1" height="1" fill="#000"/><rect x="126" y="147" width="1" height="1" fill="#000"/><rect x="120" y="149" width="1" height="1" fill="#000"/><rect x="122" y="149" width="1" height="1" fill="#000"/><rect x="124" y="149" width="1" height="1" fill="#000"/><rect x="126" y="149" width="1" height="1" fill="#000"/>
<rect x="138" y="137" width="2" height="10" fill="#000"/><rect x="138" y="137" width="7" height="2" fill="#000"/><rect x="144" y="138" width="2" height="4" fill="#000"/><rect x="138" y="141" width="7" height="2" fill="#000"/><rect x="146" y="145" width="1" height="1" fill="#f00"/><rect x="148" y="145" width="1" height="1" fill="#00f"/><rect x="150" y="145" width="1" height="1" fill="#f00"/><rect x="152" y="145" width="1" height="1" fill="#00f"/><rect x="146" y="147" width="1" height="1" fill="#f00"/><rect x="148" y="147" width="1" height="1" fill="#00f"/><rect x="150" y="147" width="1" height="1" fill="#f00"/><rect x="152" y="147" width="1" height="1" fill="#00f"/><rect x="146" y="149" width="1" height="1" fill="#f00"/><rect x="148" y="149" width="1" height="1" fill="#00f"/><rect x="150" y="149" width="1" height="1" fill="#f00"/><rect x="152" y="149" width="1" height="1" fill="#00f"/>
<rect x="164" y="137" width="8" height="2" fill="#000"/><rect x="167" y="137" width="2" height="10" fill="#000"/>
<rect x="190" y="137" width="8" height="2" fill="#000"/><rect x="193" y="137" width="2" height="10" fill="#000"/><rect x="198" y="145" width="1" height="1" fill="#f00"/><rect x="200" y="145" width="1" height="1" fill="#00f"/><rect x="202" y="145" width="1" height="1" fill="#f00"/><rect x="204" y="145" width="1" height="1" fill="#00f"/><rect x="198" y="147" width="1" height="1" fill="#f00"/><rect x="200" y="147" width="1" height="1" fill="#00f"/><rect x="202" y="147" width="1" height="1" fill="#f00"/><rect x="204" y="147" width="1" height="1" fill="#00f"/><rect x="198" y="149" width="1" height="1" fill="#f00"/><rect x="200" y="149" width="1" height="1" fill="#00f"/><rect x="202" y="149" width="1" height="1" fill="#f00"/><rect x="204" y="149" width="1" height="1" fill="#00f"/>
<text x="215" y="140" font-family="Liberation Sans" font-weight="bold" font-size="7" fill="#800000" stroke="#800000" stroke-width="0.5" textLength="17.5" lengthAdjust="spacingAndGlyphs">DNS</text>
<text x="220" y="146" font-family="Liberation Sans" font-weight="bold" font-size="7" fill="#000080" stroke="#000080" stroke-width="0.5" textLength="8" lengthAdjust="spacingAndGlyphs">IP</text>
<text x="215" y="152" font-family="Liberation Sans" font-weight="bold" font-size="7" fill="#ffff00" stroke="#ffff00" stroke-width="0.5" textLength="18" lengthAdjust="spacingAndGlyphs">MAC</text>
<text x="241.8" y="144" font-family="Liberation Sans" font-weight="bold" font-size="9.5" fill="#000" textLength="14.2" lengthAdjust="spacingAndGlyphs">NS</text>
<text x="240" y="151" font-family="Liberation Sans" font-weight="bold" font-size="8" fill="#0000ff" stroke="#0000ff" stroke-width="0.4" textLength="19.3" lengthAdjust="spacingAndGlyphs">look</text>
<text x="267.8" y="144" font-family="Liberation Sans" font-weight="bold" font-size="9.5" fill="#000" textLength="15.1" lengthAdjust="spacingAndGlyphs">NB</text>
<text x="267" y="151" font-family="Liberation Sans" font-weight="bold" font-size="8" fill="#0000ff" stroke="#0000ff" stroke-width="0.4" textLength="17.3" lengthAdjust="spacingAndGlyphs">stat</text>
<rect x="303" y="135.7" width="12.5" height="13.5" fill="#d8ecd0" stroke="#000" stroke-width="1.3"/>
<rect x="302.3" y="137" width="1.6" height="12" fill="#000"/><rect x="304.6" y="137" width="1.2" height="11" fill="#9cc8f0"/><rect x="313.5" y="137" width="1.5" height="11.5" fill="#f4eebc"/>
<rect x="307" y="138.5" width="1.3" height="3.5" fill="#f0e000"/><rect x="307" y="142.5" width="1.3" height="1.3" fill="#f0e000"/>
<rect x="311.2" y="137.2" width="1.3" height="1.3" fill="#0000ff"/><rect x="311.2" y="139" width="1.3" height="3.8" fill="#0000ff"/>
<path d="M309.5 144.5 Q310 143 311.3 143.2 Q312.5 143.5 311.8 145 L310.8 146" fill="none" stroke="#c00000" stroke-width="1.2"/><rect x="310.3" y="147" width="1.2" height="1.2" fill="#c00000"/>
<circle cx="332" cy="140.5" r="4.2" fill="#fff" stroke="#000" stroke-width="1.6" stroke-dasharray="1.5 1"/><circle cx="332" cy="140.5" r="1.5" fill="#000"/>
<circle cx="338" cy="146" r="4.2" fill="#ffff00" stroke="#000" stroke-width="1.6" stroke-dasharray="1.5 1"/><circle cx="338" cy="146" r="1.5" fill="#000"/>
<rect x="354.5" y="135.5" width="13" height="9" rx="1" fill="#d8d8d8" stroke="#000" stroke-width="1"/>
<rect x="357" y="138" width="7" height="4" fill="#0000ff"/><rect x="357" y="138" width="7" height="4" fill="none" stroke="#404040" stroke-width="0.6"/>
<rect x="353.5" y="145.5" width="15" height="5" rx="1" fill="#d0d0d0" stroke="#000" stroke-width="1"/>
<rect x="356" y="148" width="1.3" height="1.3" fill="#10d010"/><rect x="360" y="147.5" width="6" height="1.3" fill="#000"/>
<rect x="383" y="135.2" width="10" height="11" fill="#a0a0a0" stroke="#303030" stroke-width="0.8"/>
<rect x="384.2" y="136.2" width="7.8" height="8" fill="#138888"/><rect x="385.5" y="137" width="5" height="2" fill="#4060c0"/>
<circle cx="387.5" cy="143" r="3" fill="#7fd0d0" stroke="#000" stroke-width="0.8"/>
<path d="M380 150 H391" stroke="#909090" stroke-width="1.4" stroke-dasharray="1 0.6"/>
<path d="M390 146 L394.5 150" stroke="#000" stroke-width="2"/><path d="M390.5 146.3 L394.3 149.7" stroke="#ffe000" stroke-width="1"/>
<rect x="393" y="143" width="1.2" height="1.2" fill="#2ad02a"/><rect x="385" y="146" width="1.2" height="1.2" fill="#2ad02a"/>
<path d="M413.2 137.8 H420.3 V148.5 H413.2 Z" fill="#f8f8f8" stroke="#000" stroke-width="1.1"/><path d="M413.5 139.5 H420" stroke="#808080" stroke-width="0.8"/>
<rect x="406" y="143" width="4.5" height="4.5" fill="#0000c0" stroke="#000" stroke-width="0.6"/>
<path d="M410.5 145 H414.5 L418 146.5 L414 147.5 H410.5" fill="#fff" stroke="#808080" stroke-width="0.8"/>
<path d="M431 139 Q431 134.5 436.5 134.5 Q442.5 134.8 443 138.5 L441.8 142.5 L440 146 L433 147 L431 144 Z" fill="#000"/>
<path d="M433.5 139.5 L437.5 137.8 L439 141.5 L437 145.2 L433.8 144.5 Z" fill="#f4f430"/>
<path d="M435 140.5 L436.5 140 M434.5 142.5 L436.5 142.5" stroke="#fff" stroke-width="0.7"/>
<path d="M432 146.2 L438.5 148.8" stroke="#0000ff" stroke-width="2.2"/><path d="M432 146 L433.8 147.2" stroke="#00e0ff" stroke-width="1.6"/>
<rect x="437.5" y="145.8" width="2.2" height="1.6" fill="#e00000"/>
<circle cx="443.8" cy="146.3" r="3.2" fill="none" stroke="#000" stroke-width="0.6"/>
<circle cx="443.8" cy="146.3" r="2.5" fill="none" stroke="#ffe800" stroke-width="1.5"/><path d="M441.8 148.5 L439.3 150.8" stroke="#ffe800" stroke-width="1.6"/>
<ellipse cx="461.5" cy="139" rx="4.2" ry="3.8" fill="#e6e6ea" stroke="#7a7a84" stroke-width="0.9"/>
<ellipse cx="463.5" cy="146.3" rx="3.6" ry="3" fill="#e0e0e6" stroke="#7a7a84" stroke-width="0.9"/>
<ellipse cx="467.8" cy="148.3" rx="4.6" ry="2.3" fill="#c4c4ea" stroke="#6a6a90" stroke-width="0.8"/>
<path d="M464 137.6 L472 137 L472.6 145.2 L465 145.8 Z" fill="url(#glb)" stroke="#5a6a90" stroke-width="0.6"/>
<rect x="483" y="135" width="16" height="16" fill="#000"/>
<rect x="486" y="135.8" width="10" height="2.6" rx="1.3" fill="#fff" stroke="#000080" stroke-width="1.1"/>
<rect x="484" y="138.8" width="14" height="1" fill="#909090"/>
<rect x="484" y="141" width="14" height="9" fill="#138a8a"/>
<path d="M485.5 141.5 V149 M487 145 L489 147 H493" stroke="#000" stroke-width="1.1" fill="none"/>
<polygon points="514,135.5 520,135.5 522,137.5 522,142.5 520,144.5 514,144.5 512,142.5 512,137.5" fill="#fff" stroke="#e00000" stroke-width="1.6"/>
<rect x="516" y="139" width="1.2" height="1.5" fill="#000"/><rect x="517" y="140" width="2" height="1" fill="#000"/>
<path d="M510.5 152 V147.5 Q510.5 146 512 146 H522 Q523.5 146 523.5 147.5 V152" fill="#fff" stroke="#404040" stroke-width="1.2"/>
<rect x="513" y="148" width="7.5" height="3" fill="#0000ff"/><rect x="522.5" y="147" width="1.5" height="5" fill="#000"/>
<path d="M536 135.5 H550 Q551 135.5 551 136.5 V140.5 Q551 141.5 550 141.5 H547 L547.5 144.5 L544 141.5 H536 Q535 141.5 535 140.5 V136.5 Q535 135.5 536 135.5 Z" fill="#fff" stroke="#0000f0" stroke-width="1.1"/>
<path d="M538 137.5 h1 M540 137.5 h2 M543 137.5 h1 M545 137.5 h1 M547 137.5 h1 M538 139.5 h2 M542 139.5 h1 M545 139.5 h1" stroke="#000" stroke-width="1"/>
<path d="M536.5 152 V147.5 Q536.5 146 538 146 H548 Q549.5 146 549.5 147.5 V152" fill="#fff" stroke="#404040" stroke-width="1.2"/>
<rect x="539" y="148" width="7.5" height="3" fill="#0000ff"/><rect x="548.5" y="146" width="1.5" height="6" fill="#000"/>
<path d="M561.5 137.5 Q561.5 136 563 136 L570 137.5 L576.5 141 V148.5 L572 150.5 L563 149 Q561.5 148.5 561.5 147 Z" fill="#d8d8d8" stroke="#505050" stroke-width="0.9"/>
<path d="M563.5 139 L569.5 140.5 V147.5 L563.5 146.5 Z" fill="#0000ff"/><path d="M565 143 h3 M566.5 141.5 v3" stroke="#30d0ff" stroke-width="1"/>
<path d="M573 141.5 V149 M575.5 142 V148" stroke="#000" stroke-width="1.2"/>
<path d="M595.0 146 V137.5 Q595.0 136 596.5 136 H599.5 L601.0 137.5 H604.5 L605.0 139" fill="#f8e088" stroke="#d4a430" stroke-width="1"/><path d="M597.0 140 H607.0 L604.5 146 H595.0 Z" fill="url(#yf)" stroke="#d4a430" stroke-width="1"/><path d="M594.5 149 H604.5" stroke="#606878" stroke-width="1"/><rect x="598.0" y="147" width="4" height="3.5" fill="#e8b838" stroke="#b08020" stroke-width="0.6"/>
<rect x="608" y="144" width="1.8" height="7" fill="#000"/><rect x="608" y="144" width="4" height="1.4" fill="#000"/><rect x="608" y="149.6" width="4" height="1.4" fill="#000"/><rect x="611" y="144" width="1.2" height="2.2" fill="#000"/><rect x="611" y="148.8" width="1.2" height="2.2" fill="#000"/>
<path d="M621.0 146 V137.5 Q621.0 136 622.5 136 H625.5 L627.0 137.5 H630.5 L631.0 139" fill="#f8e088" stroke="#d4a430" stroke-width="1"/><path d="M623.0 140 H633.0 L630.5 146 H621.0 Z" fill="url(#yf)" stroke="#d4a430" stroke-width="1"/><path d="M620.5 149 H630.5" stroke="#606878" stroke-width="1"/><rect x="624.0" y="147" width="4" height="3.5" fill="#e8b838" stroke="#b08020" stroke-width="0.6"/>
<rect x="634" y="144" width="1.8" height="7" fill="#000"/><rect x="634" y="144" width="3.2" height="1.4" fill="#000"/><rect x="634" y="149.6" width="3.2" height="1.4" fill="#000"/><rect x="637" y="145" width="1.4" height="5" fill="#000"/>
<path d="M647.3 146 V137.5 Q647.3 136 648.8 136 H651.8 L653.3 137.5 H656.8 L657.3 139" fill="#f8e088" stroke="#d4a430" stroke-width="1"/><path d="M649.3 140 H659.3 L656.8 146 H647.3 Z" fill="url(#yf)" stroke="#d4a430" stroke-width="1"/><path d="M646.8 149 H656.8" stroke="#606878" stroke-width="1"/><rect x="650.3" y="147" width="4" height="3.5" fill="#e8b838" stroke="#b08020" stroke-width="0.6"/>
<rect x="660" y="144" width="1.8" height="7" fill="#000"/><rect x="660" y="144" width="4" height="1.4" fill="#000"/><rect x="660" y="146.9" width="3.4" height="1.3" fill="#000"/><rect x="660" y="149.6" width="4" height="1.4" fill="#000"/>
<path d="M673.5 146 V137.5 Q673.5 136 675 136 H678 L679.5 137.5 H683 L683.5 139" fill="#f8e088" stroke="#d4a430" stroke-width="1"/><path d="M675.5 140 H685.5 L683 146 H673.5 Z" fill="url(#yf)" stroke="#d4a430" stroke-width="1"/><path d="M673 149 H683" stroke="#606878" stroke-width="1"/><rect x="676.5" y="147" width="4" height="3.5" fill="#e8b838" stroke="#b08020" stroke-width="0.6"/>
<rect x="686" y="146" width="1" height="1" fill="#f00"/><rect x="688" y="146" width="1" height="1" fill="#00f"/><rect x="686" y="148" width="1" height="1" fill="#f00"/><rect x="688" y="148" width="1" height="1" fill="#00f"/><rect x="686" y="150" width="1" height="1" fill="#f00"/><rect x="688" y="150" width="1" height="1" fill="#00f"/>
<path d="M700.5 146 V137.5 Q700.5 136 702 136 H705 L706.5 137.5 H710 L710.5 139" fill="#f8e088" stroke="#d4a430" stroke-width="1"/><path d="M702.5 140 H712.5 L710 146 H700.5 Z" fill="url(#yf)" stroke="#d4a430" stroke-width="1"/><path d="M700 149 H710" stroke="#606878" stroke-width="1"/><rect x="703.5" y="147" width="4" height="3.5" fill="#e8b838" stroke="#b08020" stroke-width="0.6"/>
<path d="M700 137 L710 145.5 M699 145.5 H712 M711 139 L702 145" stroke="#ff0000" stroke-width="1.3" fill="none"/>
<rect x="734" y="136" width="1.2" height="1.2" fill="#f00"/><rect x="736" y="136" width="2.5" height="1.2" fill="#000"/><rect x="739.5" y="136" width="2.5" height="1.2" fill="#000"/><rect x="743" y="136" width="4" height="1.2" fill="#000"/><rect x="748" y="136" width="1" height="1.2" fill="#000"/>
<rect x="733.2" y="137.8" width="16" height="3.2" rx="0.8" fill="#000080"/>
<rect x="734.5" y="138.8" width="1" height="1" fill="#fff"/><rect x="736" y="138.8" width="2" height="1" fill="#fff"/><rect x="739.5" y="138.8" width="2.5" height="1" fill="#fff"/><rect x="743" y="138.8" width="2" height="1" fill="#fff"/><rect x="746" y="138.8" width="2" height="1" fill="#fff"/>
<rect x="734" y="142" width="1.2" height="1.2" fill="#f00"/><rect x="736" y="142" width="2.5" height="1.2" fill="#000"/><rect x="739.5" y="142" width="2.5" height="1.2" fill="#000"/><rect x="743" y="142" width="4" height="1.2" fill="#000"/><rect x="748" y="142" width="1" height="1.2" fill="#000"/>
<path d="M749.5 139.5 H750.5 V145.5 L747 147" fill="none" stroke="#0000ff" stroke-width="1"/>
<polygon points="732,147 737,142.8 737,145.5 745,145.5 745,148.5 737,148.5 737,151.5" fill="#0000ff"/>
<path d="M733 148 L737 151.5" stroke="#000" stroke-width="1.2"/>
<path d="M742.5 144.5 L747.5 149.5 M747.5 144.5 L742.5 149.5" stroke="#ff0000" stroke-width="0.9"/>
</svg>
<!--ICONS_ROW3-->

<!-- tabs -->
<div class="a" style="left:10px;top:164px;width:108px;height:30px;border-top:1px solid #fff;border-left:1px solid #fff;border-radius:3px 3px 0 0"></div>
<div class="a" style="left:115px;top:165px;width:1px;height:29px;background:#1a1a1a"></div>
<div class="a" style="left:116px;top:166px;width:150px;height:1px;background:#fafafa"></div>
<div class="a" style="left:267px;top:166px;width:110px;height:1px;background:#fafafa"></div>
<div class="a" style="left:266px;top:167px;width:1px;height:26px;background:#1a1a1a"></div>
<div class="a" style="left:377px;top:167px;width:1px;height:26px;background:#1a1a1a"></div>
<div class="t" style="left:42px;top:170px">Connection</div>
<div class="t" style="left:149px;top:173px">Active Connection</div>
<div class="t" style="left:300.5px;top:173px">Recordings</div>
<svg style="left:0;top:0" width="804" height="573" viewBox="0 0 804 573"><defs><linearGradient id="lbs2" x1="0" y1="0" x2="0" y2="1"><stop offset="0" stop-color="#9ad6ff"/><stop offset="0.5" stop-color="#1a9af8"/><stop offset="1" stop-color="#5ab8f8"/></linearGradient><radialGradient id="reelg" cx="0.4" cy="0.4" r="0.7"><stop offset="0" stop-color="#fae888"/><stop offset="0.6" stop-color="#e6c040"/><stop offset="1" stop-color="#b89028"/></radialGradient></defs><g transform="translate(0 0)"><rect x="21.5" y="166.8" width="15" height="11" fill="#e0dede" stroke="#a8a8a8" stroke-width="0.7"/><rect x="22.5" y="168" width="13" height="9" fill="url(#dbs)"/><path d="M28 178 h5 v2.5 h-5z" fill="#d0d0d0"/><ellipse cx="30.5" cy="181.5" rx="4" ry="1.2" fill="#e8e8e8" stroke="#b0b0b0" stroke-width="0.5"/><rect x="13.3" y="172.8" width="14.5" height="10.7" fill="#e6e4e4" stroke="#b0aaaa" stroke-width="0.7"/><rect x="14.3" y="173.8" width="12.6" height="8.8" fill="url(#lbs2)"/><path d="M19 183.5 h4 v1.2 h-4z" fill="#d8d8d8"/><ellipse cx="20.8" cy="186" rx="4.8" ry="1.6" fill="#ececec" stroke="#a8a8a8" stroke-width="0.6"/></g><g transform="translate(106.3 2.4)"><rect x="21.5" y="166.8" width="15" height="11" fill="#e0dede" stroke="#a8a8a8" stroke-width="0.7"/><rect x="22.5" y="168" width="13" height="9" fill="url(#lbs2)"/><path d="M28 178 h5 v2.5 h-5z" fill="#d0d0d0"/><ellipse cx="30.5" cy="181.5" rx="4" ry="1.2" fill="#e8e8e8" stroke="#b0b0b0" stroke-width="0.5"/><rect x="13.3" y="172.8" width="14.5" height="10.7" fill="#e6e4e4" stroke="#b0aaaa" stroke-width="0.7"/><rect x="14.3" y="173.8" width="12.6" height="8.8" fill="url(#lbs2)"/><path d="M19 183.5 h4 v1.2 h-4z" fill="#d8d8d8"/><ellipse cx="20.8" cy="186" rx="4.8" ry="1.6" fill="#ececec" stroke="#a8a8a8" stroke-width="0.6"/></g><path d="M272.4 192 L281.5 189 L280.5 186.5 L271.2 189.6 Z" fill="#3e92e0"/><ellipse cx="282.3" cy="179.1" rx="8.6" ry="10.5" transform="rotate(18 282.3 178.6)" fill="#9c7c1c" stroke="#7a6014" stroke-width="0.5"/><ellipse cx="284.6" cy="178.6" rx="8.5" ry="10.4" transform="rotate(18 284.6 178.6)" fill="url(#reelg)" stroke="#c09a30" stroke-width="0.5"/><ellipse cx="288.83" cy="179.57" rx="0.95" ry="1.9" transform="rotate(101 288.83 179.57)" fill="#6a5414"/><ellipse cx="286.98" cy="182.68" rx="0.95" ry="1.9" transform="rotate(146 286.98 182.68)" fill="#6a5414"/><ellipse cx="283.74" cy="183.40" rx="0.95" ry="1.9" transform="rotate(191 283.74 183.40)" fill="#6a5414"/><ellipse cx="281.01" cy="181.31" rx="0.95" ry="1.9" transform="rotate(236 281.01 181.31)" fill="#6a5414"/><ellipse cx="280.37" cy="177.63" rx="0.95" ry="1.9" transform="rotate(281 280.37 177.63)" fill="#6a5414"/><ellipse cx="282.22" cy="174.52" rx="0.95" ry="1.9" transform="rotate(326 282.22 174.52)" fill="#6a5414"/><ellipse cx="285.46" cy="173.80" rx="0.95" ry="1.9" transform="rotate(371 285.46 173.80)" fill="#6a5414"/><ellipse cx="288.19" cy="175.89" rx="0.95" ry="1.9" transform="rotate(416 288.19 175.89)" fill="#6a5414"/><circle cx="284.6" cy="178.6" r="0.9" fill="#6a5414"/></svg>
<div class="hw" style="left:116px;top:193px;width:677px"></div>

<!-- tree panel -->
<div class="a" style="left:8px;top:196px;width:135px;height:350px;background:#fff;border-top:2px solid #a0a0a0;border-left:2px solid #a0a0a0;border-right:2px solid #fff;border-bottom:2px solid #fff"></div>
<div class="a" style="left:10px;top:198px;width:131px;height:346px;border-top:1px solid #696969;border-left:1px solid #696969"></div>
<!-- list panel -->
<div class="a" style="left:146px;top:196px;width:650px;height:350px;background:#fff;border-top:1px solid #a0a0a0;border-left:1px solid #a0a0a0;border-right:3px solid #fff;border-bottom:3px solid #fff"></div>
<div class="a" style="left:147px;top:197px;width:646px;height:346px;border-top:2px solid #696969;border-left:1px solid #696969"></div>

<svg width="0" height="0" style="position:absolute">
<defs>
<linearGradient id="fg" x1="0" y1="0" x2="0.4" y2="1"><stop offset="0" stop-color="#fff3bc"/><stop offset="0.55" stop-color="#fddb80"/><stop offset="1" stop-color="#fcca58"/></linearGradient>
<linearGradient id="fg2" x1="0" y1="0" x2="0" y2="1"><stop offset="0" stop-color="#fde9a8"/><stop offset="1" stop-color="#f0c24e"/></linearGradient>
<symbol id="folder" viewBox="0 0 24 20">
<path d="M1.5 18.5 V3 Q1.5 1.5 3 1.5 H9.3 L10.6 3.5 H21.5 V5.5 H22.5 V18.5 Z" fill="url(#fg)" stroke="#d4a012" stroke-width="1" stroke-linejoin="round"/>
<path d="M10.6 5.5 H21.5" stroke="#d4a012" stroke-width="1"/>
<path d="M11 4.5 H21" stroke="#fbe39a" stroke-width="1"/>
<path d="M2.5 14 Q12 13 22 6.5 V17.5 H2.5 Z" fill="#fcc95a" opacity="0.45"/>
</symbol>
<symbol id="folderopen" viewBox="0 0 24 24">
<path d="M1.5 21.5 V4.2 Q1.5 2.8 3 2.6 L11 2 L12.2 3.4 L19.3 2.5 Q20.2 2.4 20.2 3.4 L19.8 14 Z" fill="url(#fg2)" stroke="#d4a012" stroke-width="1" stroke-linejoin="round"/>
<path d="M2.8 21.6 L5.4 11.4 Q5.6 10.6 6.4 10.4 L12.6 8.8 L14 7.2 L21 4.6 Q22 4.3 21.8 5.3 L19.7 16.5 Q19.5 17.2 18.8 17.4 Z" fill="url(#fg)" stroke="#d4a012" stroke-width="1" stroke-linejoin="round"/>
</symbol>
</defs></svg>
<div class="a" style="left:32px;top:211px;width:9px;height:1px;background:repeating-linear-gradient(90deg,#a0a0a0 0,#a0a0a0 1px,transparent 1px,transparent 2px)"></div>
<div class="a" style="left:26px;top:217px;width:1px;height:67px;background:repeating-linear-gradient(180deg,#a0a0a0 0,#a0a0a0 1px,transparent 1px,transparent 2px)"></div>
<div class="a" style="left:27px;top:283px;width:14px;height:1px;background:repeating-linear-gradient(90deg,#a0a0a0 0,#a0a0a0 1px,transparent 1px,transparent 2px)"></div>
<div class="a" style="left:53px;top:222px;width:1px;height:38px;background:repeating-linear-gradient(180deg,#a0a0a0 0,#a0a0a0 1px,transparent 1px,transparent 2px)"></div>
<div class="a" style="left:54px;top:235px;width:14px;height:1px;background:repeating-linear-gradient(90deg,#a0a0a0 0,#a0a0a0 1px,transparent 1px,transparent 2px)"></div>
<div class="a" style="left:54px;top:259px;width:14px;height:1px;background:repeating-linear-gradient(90deg,#a0a0a0 0,#a0a0a0 1px,transparent 1px,transparent 2px)"></div>
<div class="a" style="left:22px;top:207px;width:9px;height:9px;border:1px solid #919191;border-radius:2px;background:linear-gradient(#fff,#e6e6e6)"></div>
<div class="a" style="left:24px;top:211px;width:5px;height:1px;background:#2a4d9a"></div>
<svg style="left:41px;top:201px" width="24" height="20"><use href="#folder"/></svg>
<svg style="left:68px;top:223px" width="24" height="24"><use href="#folderopen"/></svg>
<svg style="left:68px;top:249px" width="24" height="20"><use href="#folder"/></svg>
<svg style="left:41px;top:273px" width="24" height="20"><use href="#folder"/></svg>
<div class="a" style="left:95px;top:223px;width:37px;height:24px;background:#ececec"></div>
<div class="cell" style="left:69px;top:204px;font-weight:bold;letter-spacing:-0.3px">Connection</div>
<div class="cell" style="left:96.5px;top:228px">Home</div>
<div class="cell" style="left:96.5px;top:252px">Work</div>
<div class="cell" style="left:69px;top:276px;font-weight:bold;letter-spacing:-0.3px">Looked up</div>
<div class="a" style="left:148px;top:199px;width:645px;height:9px;background:#fff"></div>
<div class="a" style="left:148px;top:208px;width:645px;height:13px;background:#f3f4f6"></div>
<div class="a" style="left:148px;top:221px;width:645px;height:1px;background:#e1e2e5"></div>
<div class="a" style="left:273px;top:199px;width:104px;height:23px;border:1px solid #a9d9f6;border-top:none;background:linear-gradient(#f3f9fd 0,#f3f9fd 8px,#e1eff9 9px,#dcedf8 22px)"></div>
<div class="a" style="left:500px;top:199px;width:1px;height:22px;background:#e3e4e6"></div>
<div class="a" style="left:642px;top:199px;width:1px;height:22px;background:#e3e4e6"></div>
<div class="a" style="left:737px;top:199px;width:1px;height:22px;background:#e3e4e6"></div>
<div class="a" style="left:272px;top:199px;width:1px;height:22px;background:#e3e4e6"></div>
<svg style="left:321px;top:199px" width="10" height="6" viewBox="0 0 10 6"><defs><linearGradient id="sa" x1="0" y1="0" x2="1" y2="0"><stop offset="0" stop-color="#2c4a66"/><stop offset="1" stop-color="#a8d4ef"/></linearGradient></defs><path d="M1 4.8 L5 1 L8.8 4.8 Z" fill="url(#sa)"/></svg>
<div class="cell" style="left:154px;top:204px;color:#1e1228">Connection name</div>
<div class="cell" style="left:278.5px;top:204px;color:#1e1228">Network address</div>
<div class="cell" style="left:382px;top:204px;color:#1e1228">User name</div>
<div class="cell" style="left:506.5px;top:204px;color:#1e1228">Implicit connection</div>
<div class="cell" style="left:649px;top:204px;color:#1e1228">Connection t...</div>
<div class="cell" style="left:744px;top:204px;color:#1e1228">Connecti</div>
<div class="a" style="left:148px;top:255px;width:645px;height:1px;background:#f0f0f0"></div>
<div class="a" style="left:148px;top:288px;width:645px;height:1px;background:#f0f0f0"></div>
<div class="a" style="left:148px;top:321px;width:645px;height:1px;background:#f0f0f0"></div>
<div class="a" style="left:148px;top:354px;width:645px;height:1px;background:#f0f0f0"></div>
<div class="a" style="left:148px;top:387px;width:645px;height:1px;background:#f0f0f0"></div>
<div class="a" style="left:148px;top:420px;width:645px;height:1px;background:#f0f0f0"></div>
<div class="a" style="left:148px;top:453px;width:645px;height:1px;background:#f0f0f0"></div>
<div class="a" style="left:148px;top:486px;width:645px;height:1px;background:#f0f0f0"></div>
<div class="a" style="left:148px;top:519px;width:645px;height:1px;background:#f0f0f0"></div>
<div class="a" style="left:273px;top:222px;width:1px;height:305px;background:#f0f0f0"></div>
<div class="a" style="left:377px;top:222px;width:1px;height:305px;background:#f0f0f0"></div>
<div class="a" style="left:501px;top:222px;width:1px;height:305px;background:#f0f0f0"></div>
<div class="a" style="left:643px;top:222px;width:1px;height:305px;background:#f0f0f0"></div>
<div class="a" style="left:738px;top:222px;width:1px;height:305px;background:#f0f0f0"></div>
<div class="a" style="left:184px;top:223px;width:609px;height:32px;background:#3399ff"></div>
<div class="a" style="left:273px;top:223px;width:1px;height:32px;background:#f4f8fd"></div>
<div class="a" style="left:377px;top:223px;width:1px;height:32px;background:#f4f8fd"></div>
<div class="a" style="left:501px;top:223px;width:1px;height:32px;background:#f4f8fd"></div>
<div class="a" style="left:643px;top:223px;width:1px;height:32px;background:#f4f8fd"></div>
<div class="a" style="left:738px;top:223px;width:1px;height:32px;background:#f4f8fd"></div>
<div class="a" style="left:184px;top:223px;width:89px;height:32px;border-left:1px dotted #d9731f;border-top:1px dotted #d9731f"></div>
<div class="a" style="left:274px;top:223px;width:519px;height:1px;border-top:1px dotted #d9731f"></div>
<div class="cell" style="left:185.5px;top:233px;font-weight:bold;letter-spacing:-0.15px;color:#fff">Home - PC1</div>
<div class="cell" style="left:278px;top:233px;color:#fff;letter-spacing:-0.55px">10.1.15.41</div>
<div class="cell" style="left:383px;top:233px;color:#fff">Administrator</div>
<div class="cell" style="left:507px;top:233px;color:#fff">Full Control</div>
<div class="cell" style="left:649px;top:233px;color:#fff">No</div>
<div class="cell" style="left:744px;top:233px;color:#fff">No</div>
<svg style="left:147.3px;top:218.9px" width="40" height="40" viewBox="0 0 573 573"><use href="#mon" x="0" y="0" width="573" height="573"/><path d="M262 385 Q285 352 322 375 L345 400 L345 275 Q345 250 365 250 Q385 250 385 275 L385 235 Q385 212 405 212 Q425 212 425 235 L425 250 Q428 230 448 232 Q465 235 465 255 L465 280 Q470 262 485 265 Q500 270 500 290 L500 430 Q500 495 435 495 L370 495 Q330 490 300 440 Z" fill="url(#hand)" stroke="#c8941e" stroke-width="12" stroke-linejoin="round"/><path d="M385 275 V350 M425 250 V350 M465 280 V350" stroke="#e9b53a" stroke-width="8" fill="none"/></svg>
<div class="cell" style="left:185.5px;top:266px;font-weight:bold;letter-spacing:-0.15px;color:#000">Home - PC2</div>
<div class="cell" style="left:278px;top:266px;color:#000;letter-spacing:-0.55px">10.1.15.42</div>
<div class="cell" style="left:383px;top:266px;color:#000">Administrator</div>
<div class="cell" style="left:507px;top:266px;color:#000">View Only</div>
<div class="cell" style="left:649px;top:266px;color:#000">No</div>
<div class="cell" style="left:744px;top:266px;color:#000">No</div>
<svg style="left:147.3px;top:251.9px" width="40" height="40" viewBox="0 0 573 573"><use href="#mon" x="0" y="0" width="573" height="573"/></svg>
<div class="cell" style="left:185.5px;top:299px;font-weight:bold;letter-spacing:-0.15px;color:#000">Home - PC3</div>
<div class="cell" style="left:278px;top:299px;color:#000;letter-spacing:-0.55px">10.1.15.43</div>
<div class="cell" style="left:383px;top:299px;color:#000">Administrator</div>
<div class="cell" style="left:507px;top:299px;color:#000">File Transfer</div>
<div class="cell" style="left:649px;top:299px;color:#000">No</div>
<div class="cell" style="left:744px;top:299px;color:#000">No</div>
<svg style="left:147.3px;top:284.9px" width="40" height="40" viewBox="0 0 573 573"><path d="M65 95 Q65 80 80 80 L150 75 L170 90 L310 80 Q330 78 330 95 L330 270 L80 350 Q62 352 65 335 Z" fill="url(#yf)" stroke="#d89e12" stroke-width="12"/><path d="M180 85 L290 85 L335 130 L335 250 L180 270 Z" fill="url(#docg)" stroke="#6fb0e8" stroke-width="10"/><path d="M100 200 L230 170 L250 150 L350 130 L320 300 L70 350 Z" fill="url(#yf)" stroke="#d89e12" stroke-width="12" stroke-linejoin="round"/><path d="M375 100 Q455 75 485 150" fill="none" stroke="#5cc840" stroke-width="30"/><path d="M440 140 L520 150 L480 215 Z" fill="#4cba30"/><path d="M195 240 Q190 220 210 220 L300 218 L320 240 L460 225 Q480 222 478 245 L470 390 Q468 410 450 412 L215 490 Q195 495 195 475 Z" fill="url(#yf)" stroke="#d89e12" stroke-width="12" stroke-linejoin="round"/><path d="M245 330 L330 300 L350 280 L485 250 L450 410 L210 490 Z" fill="url(#yf)" stroke="#d89e12" stroke-width="12" stroke-linejoin="round"/></svg>
<div class="cell" style="left:185.5px;top:332px;font-weight:bold;letter-spacing:-0.15px;color:#000">Home - PC4</div>
<div class="cell" style="left:278px;top:332px;color:#000;letter-spacing:-0.55px">10.1.15.44</div>
<div class="cell" style="left:383px;top:332px;color:#000">Administrator</div>
<div class="cell" style="left:507px;top:332px;color:#000">Command Prompt</div>
<div class="cell" style="left:649px;top:332px;color:#000">No</div>
<div class="cell" style="left:744px;top:332px;color:#000">No</div>
<svg style="left:147.3px;top:317.9px" width="40" height="40" viewBox="0 0 573 573"><use href="#monb" x="0" y="0" width="573" height="573"/><text x="145" y="300" font-family="Liberation Serif" font-weight="bold" font-size="205" fill="#fff" stroke="#fff" stroke-width="6" textLength="125" lengthAdjust="spacingAndGlyphs">C</text><circle cx="318" cy="218" r="22" fill="#fff"/><circle cx="318" cy="282" r="22" fill="#fff"/><path d="M355 160 L410 300" stroke="#fff" stroke-width="22"/></svg>
<div class="cell" style="left:185.5px;top:365px;font-weight:bold;letter-spacing:-0.15px;color:#000">Home - PC5</div>
<div class="cell" style="left:278px;top:365px;color:#000;letter-spacing:-0.55px">10.1.15.45</div>
<div class="cell" style="left:383px;top:365px;color:#000">Administrator</div>
<div class="cell" style="left:507px;top:365px;color:#000">Process Control</div>
<div class="cell" style="left:649px;top:365px;color:#000">No</div>
<div class="cell" style="left:744px;top:365px;color:#000">No</div>
<svg style="left:147.3px;top:350.9px" width="40" height="40" viewBox="0 0 573 573"><use href="#monb" x="0" y="0" width="573" height="573"/><path d="M118 275 L165 260 L225 200 L280 265 L335 170 L445 280" fill="none" stroke="#12e61a" stroke-width="20" stroke-linejoin="round"/></svg>
<div class="cell" style="left:185.5px;top:398px;font-weight:bold;letter-spacing:-0.15px;color:#000">Home - PC6</div>
<div class="cell" style="left:278px;top:398px;color:#000;letter-spacing:-0.55px">10.1.15.46</div>
<div class="cell" style="left:383px;top:398px;color:#000">Administrator</div>
<div class="cell" style="left:507px;top:398px;color:#000">Recording the Screen</div>
<div class="cell" style="left:649px;top:398px;color:#000">No</div>
<div class="cell" style="left:744px;top:398px;color:#000">No</div>
<svg style="left:147.3px;top:383.9px" width="40" height="40" viewBox="0 0 573 573"><use href="#mon" x="0" y="0" width="573" height="573"/><text x="140" y="268" font-family="Liberation Serif" font-weight="bold" font-size="130" fill="#fff" textLength="305" lengthAdjust="spacingAndGlyphs">REC</text><circle cx="385" cy="385" r="75" fill="url(#redb)" stroke="#c01010" stroke-width="8"/></svg>
<div class="cell" style="left:185.5px;top:431px;font-weight:bold;letter-spacing:-0.15px;color:#000">Home - PC7</div>
<div class="cell" style="left:278px;top:431px;color:#000;letter-spacing:-0.55px">10.1.15.47</div>
<div class="cell" style="left:383px;top:431px;color:#000">Administrator</div>
<div class="cell" style="left:507px;top:431px;color:#000">Chat</div>
<div class="cell" style="left:649px;top:431px;color:#000">No</div>
<div class="cell" style="left:744px;top:431px;color:#000">No</div>
<svg style="left:147.3px;top:416.9px" width="40" height="40" viewBox="0 0 573 573"><use href="#mon" x="0" y="0" width="573" height="573"/><path d="M200 140 H370 Q390 140 390 160 V265 Q390 285 370 285 H320 L340 330 L280 285 H200 Q180 285 180 265 V160 Q180 140 200 140 Z" fill="url(#chat)" stroke="#d29a2a" stroke-width="8" stroke-linejoin="round"/></svg>
<div class="cell" style="left:185.5px;top:464px;font-weight:bold;letter-spacing:-0.15px;color:#000">Home - PC8</div>
<div class="cell" style="left:278px;top:464px;color:#000;letter-spacing:-0.55px">10.1.15.48</div>
<div class="cell" style="left:383px;top:464px;color:#000">Administrator</div>
<div class="cell" style="left:507px;top:464px;color:#000">Send a message</div>
<div class="cell" style="left:649px;top:464px;color:#000">No</div>
<div class="cell" style="left:744px;top:464px;color:#000">No</div>
<svg style="left:147.3px;top:449.9px" width="40" height="40" viewBox="0 0 573 573"><use href="#mon" x="0" y="0" width="573" height="573"/><path d="M205 150 L355 140 L375 300 L235 325 Z" fill="#fde98a" stroke="#e6b840" stroke-width="8"/><circle cx="282" cy="185" r="22" fill="#4aa8ee" stroke="#1a70c0" stroke-width="6"/></svg>
<div class="cell" style="left:185.5px;top:497px;font-weight:bold;letter-spacing:-0.15px;color:#000">Home - PC9</div>
<div class="cell" style="left:278px;top:497px;color:#000;letter-spacing:-0.55px">10.1.15.49</div>
<div class="cell" style="left:383px;top:497px;color:#000">Administrator</div>
<div class="cell" style="left:507px;top:497px;color:#000">Computer Shutdown</div>
<div class="cell" style="left:649px;top:497px;color:#000">No</div>
<div class="cell" style="left:744px;top:497px;color:#000">No</div>
<svg style="left:147.3px;top:482.9px" width="40" height="40" viewBox="0 0 573 573"><use href="#mon" x="0" y="0" width="573" height="573"/><circle cx="345" cy="330" r="150" fill="url(#redb)" stroke="#a30c0c" stroke-width="10"/><path d="M297 260 A88 88 0 1 0 393 260" fill="none" stroke="#fff" stroke-width="34" stroke-linecap="round"/><path d="M345 215 V335" stroke="#fff" stroke-width="34" stroke-linecap="round"/></svg>
<div class="a" style="left:148px;top:526px;width:645px;height:1px;background:#fff"></div>
<div class="a" style="left:148px;top:527px;width:645px;height:16px;background:linear-gradient(#e3e3e3 0,#ececec 2px,#ececec 14px,#e6e6e6 15px)"></div>
<div class="a" style="left:149px;top:527px;width:16px;height:15px;border:1px solid #9a9a9a;border-radius:2px;background:linear-gradient(#f7f7f7 0,#ececec 6px,#dcdcdc 7px,#d4d4d4 13px)"></div>
<svg style="left:153px;top:530px" width="8" height="10" viewBox="0 0 8 10"><path d="M6 1 L2 5 L6 9 Z" fill="#333"/></svg>
<div class="a" style="left:776px;top:527px;width:16px;height:15px;border:1px solid #9a9a9a;border-radius:2px;background:linear-gradient(#f7f7f7 0,#ececec 6px,#dcdcdc 7px,#d4d4d4 13px)"></div>
<svg style="left:781px;top:530px" width="8" height="10" viewBox="0 0 8 10"><path d="M2 1 L6 5 L2 9 Z" fill="#333"/></svg>
<div class="a" style="left:166px;top:527px;width:385px;height:15px;border:1px solid #3c7fb1;border-radius:2px;background:linear-gradient(#fff 0,#fff 1px,#def1fc 1px,#d3ecfb 6px,#b0dcf6 7px,#a6d7f4 12px,#fff 13px)"></div>
<div class="a" style="left:167px;top:528px;width:383px;height:13px;border:1px solid #fff;border-radius:1px"></div>
<svg style="left:354px;top:531px" width="9" height="7" viewBox="0 0 9 7"><path d="M1 0 V7 M4 0 V7 M7 0 V7" stroke="#1e3f5c" stroke-width="1.3"/></svg>

<!-- status bar -->
<div class="hl" style="left:8px;top:546px;width:788px"></div>
<div class="a" style="left:8px;top:547px;width:788px;height:18px;background:#fff"></div>
<div class="a" style="left:9px;top:548px;width:786px;height:16px;background:#efebe9"></div>
<div class="t" style="left:10px;top:550px;letter-spacing:0.45px">\Connection\Home\</div>
<div class="t" style="left:367px;top:550px">9</div>
<div class="vl" style="left:431px;top:549px;height:15px;background:#d8d4d2"></div>
<div class="t" style="left:435px;top:550px;letter-spacing:-0.55px">10.1.15.41</div>
<div class="vl" style="left:606px;top:549px;height:15px;background:#d8d4d2"></div>
<div class="t" style="left:610px;top:550px;letter-spacing:-0.55px">1.15.33</div>
<div class="vl" style="left:674px;top:549px;height:15px;background:#d8d4d2"></div>
<div class="vl" style="left:705px;top:549px;height:15px;background:#d8d4d2"></div>
<div class="t" style="left:709px;top:550px">NUM</div>
<div class="vl" style="left:741px;top:549px;height:15px;background:#d8d4d2"></div>
<div class="vl" style="left:776px;top:549px;height:15px;background:#d8d4d2"></div>
<div class="a" style="left:792px;top:555px;width:2px;height:2px;background:#fff"></div><div class="a" style="left:793px;top:556px;width:1px;height:1px;background:#8a8a8a"></div><div class="a" style="left:792px;top:555px;width:1px;height:1px;background:#c8c8c8"></div><div class="a" style="left:789px;top:558px;width:2px;height:2px;background:#fff"></div><div class="a" style="left:790px;top:559px;width:1px;height:1px;background:#8a8a8a"></div><div class="a" style="left:789px;top:558px;width:1px;height:1px;background:#c8c8c8"></div><div class="a" style="left:792px;top:558px;width:2px;height:2px;background:#fff"></div><div class="a" style="left:793px;top:559px;width:1px;height:1px;background:#8a8a8a"></div><div class="a" style="left:792px;top:558px;width:1px;height:1px;background:#c8c8c8"></div><div class="a" style="left:786px;top:561px;width:2px;height:2px;background:#fff"></div><div class="a" style="left:787px;top:562px;width:1px;height:1px;background:#8a8a8a"></div><div class="a" style="left:786px;top:561px;width:1px;height:1px;background:#c8c8c8"></div><div class="a" style="left:789px;top:561px;width:2px;height:2px;background:#fff"></div><div class="a" style="left:790px;top:562px;width:1px;height:1px;background:#8a8a8a"></div><div class="a" style="left:789px;top:561px;width:1px;height:1px;background:#c8c8c8"></div><div class="a" style="left:792px;top:561px;width:2px;height:2px;background:#fff"></div><div class="a" style="left:793px;top:562px;width:1px;height:1px;background:#8a8a8a"></div><div class="a" style="left:792px;top:561px;width:1px;height:1px;background:#c8c8c8"></div>
</body></html>
